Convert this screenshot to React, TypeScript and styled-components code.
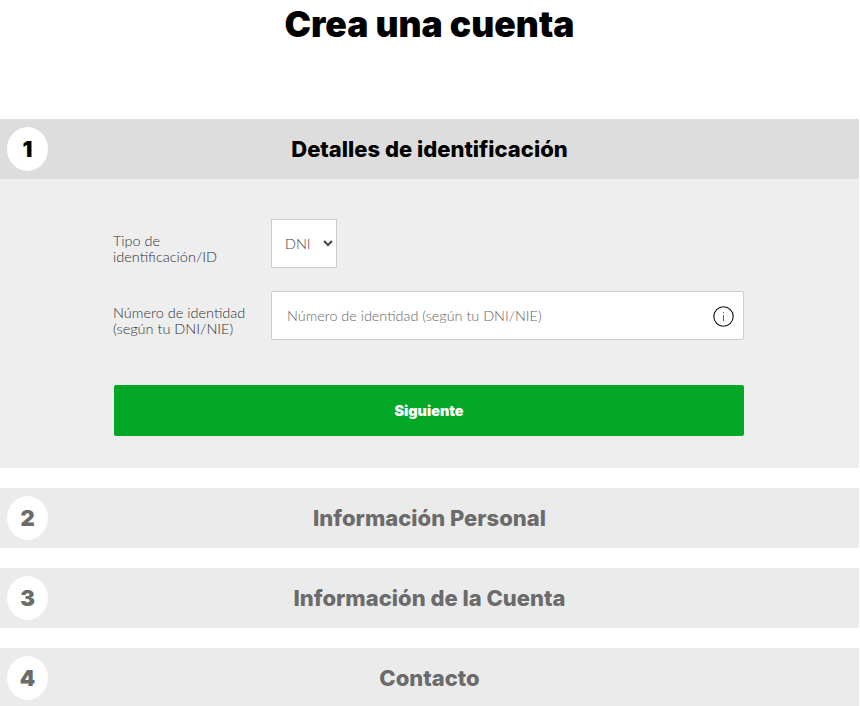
import React from 'react';
import styled, { createGlobalStyle } from 'styled-components';

const GlobalStyle = createGlobalStyle`
  html, body {
    margin: 0;
    padding: 0;
    background: #fff;
    overflow: hidden;
  }
  body {
    font-family: "Lato", "Liberation Sans", sans-serif;
  }
`;

const Page = styled.div`
  width: 859px;
  height: 706px;
  overflow: hidden;
`;

const Title = styled.h1`
  margin: 0 0 72px;
  height: 47px;
  font-family: "Inter", "Liberation Sans", sans-serif;
  font-weight: 900;
  font-size: 35.5px;
  line-height: 50px;
  text-align: center;
  color: #000;
`;

const Step = styled.section`
  margin-bottom: 20px;
`;

const StepHeader = styled.div<{ $active?: boolean }>`
  display: flex;
  align-items: center;
  justify-content: center;
  position: relative;
  height: 60px;
  background: ${(p) => (p.$active ? '#dddddd' : '#ebebeb')};
  color: ${(p) => (p.$active ? '#000' : '#6b6b6b')};
`;

const StepNumber = styled.span`
  position: absolute;
  left: 7px;
  top: 8px;
  width: 41px;
  height: 44px;
  border-radius: 50%;
  background: #fff;
  display: flex;
  align-items: center;
  justify-content: center;
  font-family: "Inter", "Liberation Sans", sans-serif;
  font-weight: 900;
  font-size: 22px;
`;

const StepTitle = styled.h2`
  margin: 0;
  font-family: "Inter", "Liberation Sans", sans-serif;
  font-weight: 800;
  font-size: 22px;
  line-height: 32px;
`;

const StepBody = styled.div`
  background: #eee;
  padding: 40px 115px 32px 113px;
  height: 289px;
  box-sizing: border-box;
`;

const FormRow = styled.div`
  display: flex;
  align-items: center;
  margin-bottom: 23px;
`;

const Label = styled.label`
  width: 138px;
  margin-right: 20px;
  padding-top: 11px;
  flex: none;
  font-size: 14.5px;
  font-weight: 300;
  line-height: 16px;
  color: #333;
`;

const Select = styled.select`
  width: 66px;
  height: 49px;
  box-sizing: border-box;
  border: 1px solid #ccc;
  background: #fff;
  padding: 0 0 0 9px;
  border-radius: 0;
  font-family: inherit;
  font-size: 14.4px;
  font-weight: 300;
  color: #444;
`;

const InputWrap = styled.div`
  position: relative;
  flex: 1;
`;

const Input = styled.input`
  display: block;
  width: 100%;
  height: 49px;
  box-sizing: border-box;
  border: 1px solid #ccc;
  border-radius: 2px;
  background: #fff;
  padding: 0 44px 0 15px;
  font-family: inherit;
  font-size: 14.4px;
  font-weight: 300;

  &::placeholder {
    color: #666;
    opacity: 1;
  }
`;

const InfoIcon = styled.svg`
  position: absolute;
  right: 10px;
  top: 15px;
  width: 21px;
  height: 21px;
`;

const NextButton = styled.button`
  display: block;
  width: 630px;
  height: 51px;
  margin: 45px 0 0 1px;
  border: 0;
  border-radius: 2px;
  background: #02a825;
  color: #fff;
  font-family: "Inter", "Liberation Sans", sans-serif;
  font-weight: 900;
  font-size: 14.4px;
`;

const closedSteps = [
  { n: 2, title: 'Información Personal' },
  { n: 3, title: 'Información de la Cuenta' },
  { n: 4, title: 'Contacto' },
];

const App: React.FC = () => {
  return (
    <Page>
      <GlobalStyle />
      <Title>Crea una cuenta</Title>

      <Step>
        <StepHeader $active>
          <StepNumber>1</StepNumber>
          <StepTitle>Detalles de identificación</StepTitle>
        </StepHeader>
        <StepBody>
          <FormRow>
            <Label htmlFor="tipo">Tipo de identificación/ID</Label>
            <Select id="tipo" defaultValue="DNI">
              <option>DNI</option>
              <option>NIE</option>
            </Select>
          </FormRow>
          <FormRow>
            <Label htmlFor="numero">Número de identidad (según tu DNI/NIE)</Label>
            <InputWrap>
              <Input id="numero" placeholder="Número de identidad (según tu DNI/NIE)" />
              <InfoIcon viewBox="0 0 21 21" fill="none">
                <circle cx="10.5" cy="10.5" r="9.7" stroke="#111" strokeWidth="1.1" />
                <path d="M10.5 9v6" stroke="#8a4a6a" strokeWidth="1" />
                <path d="M10.5 6v1.2" stroke="#8a4a6a" strokeWidth="1" />
              </InfoIcon>
            </InputWrap>
          </FormRow>
          <NextButton type="button">Siguiente</NextButton>
        </StepBody>
      </Step>

      {closedSteps.map((s) => (
        <Step key={s.n}>
          <StepHeader>
            <StepNumber>{s.n}</StepNumber>
            <StepTitle>{s.title}</StepTitle>
          </StepHeader>
        </Step>
      ))}
    </Page>
  );
};

export default App;
